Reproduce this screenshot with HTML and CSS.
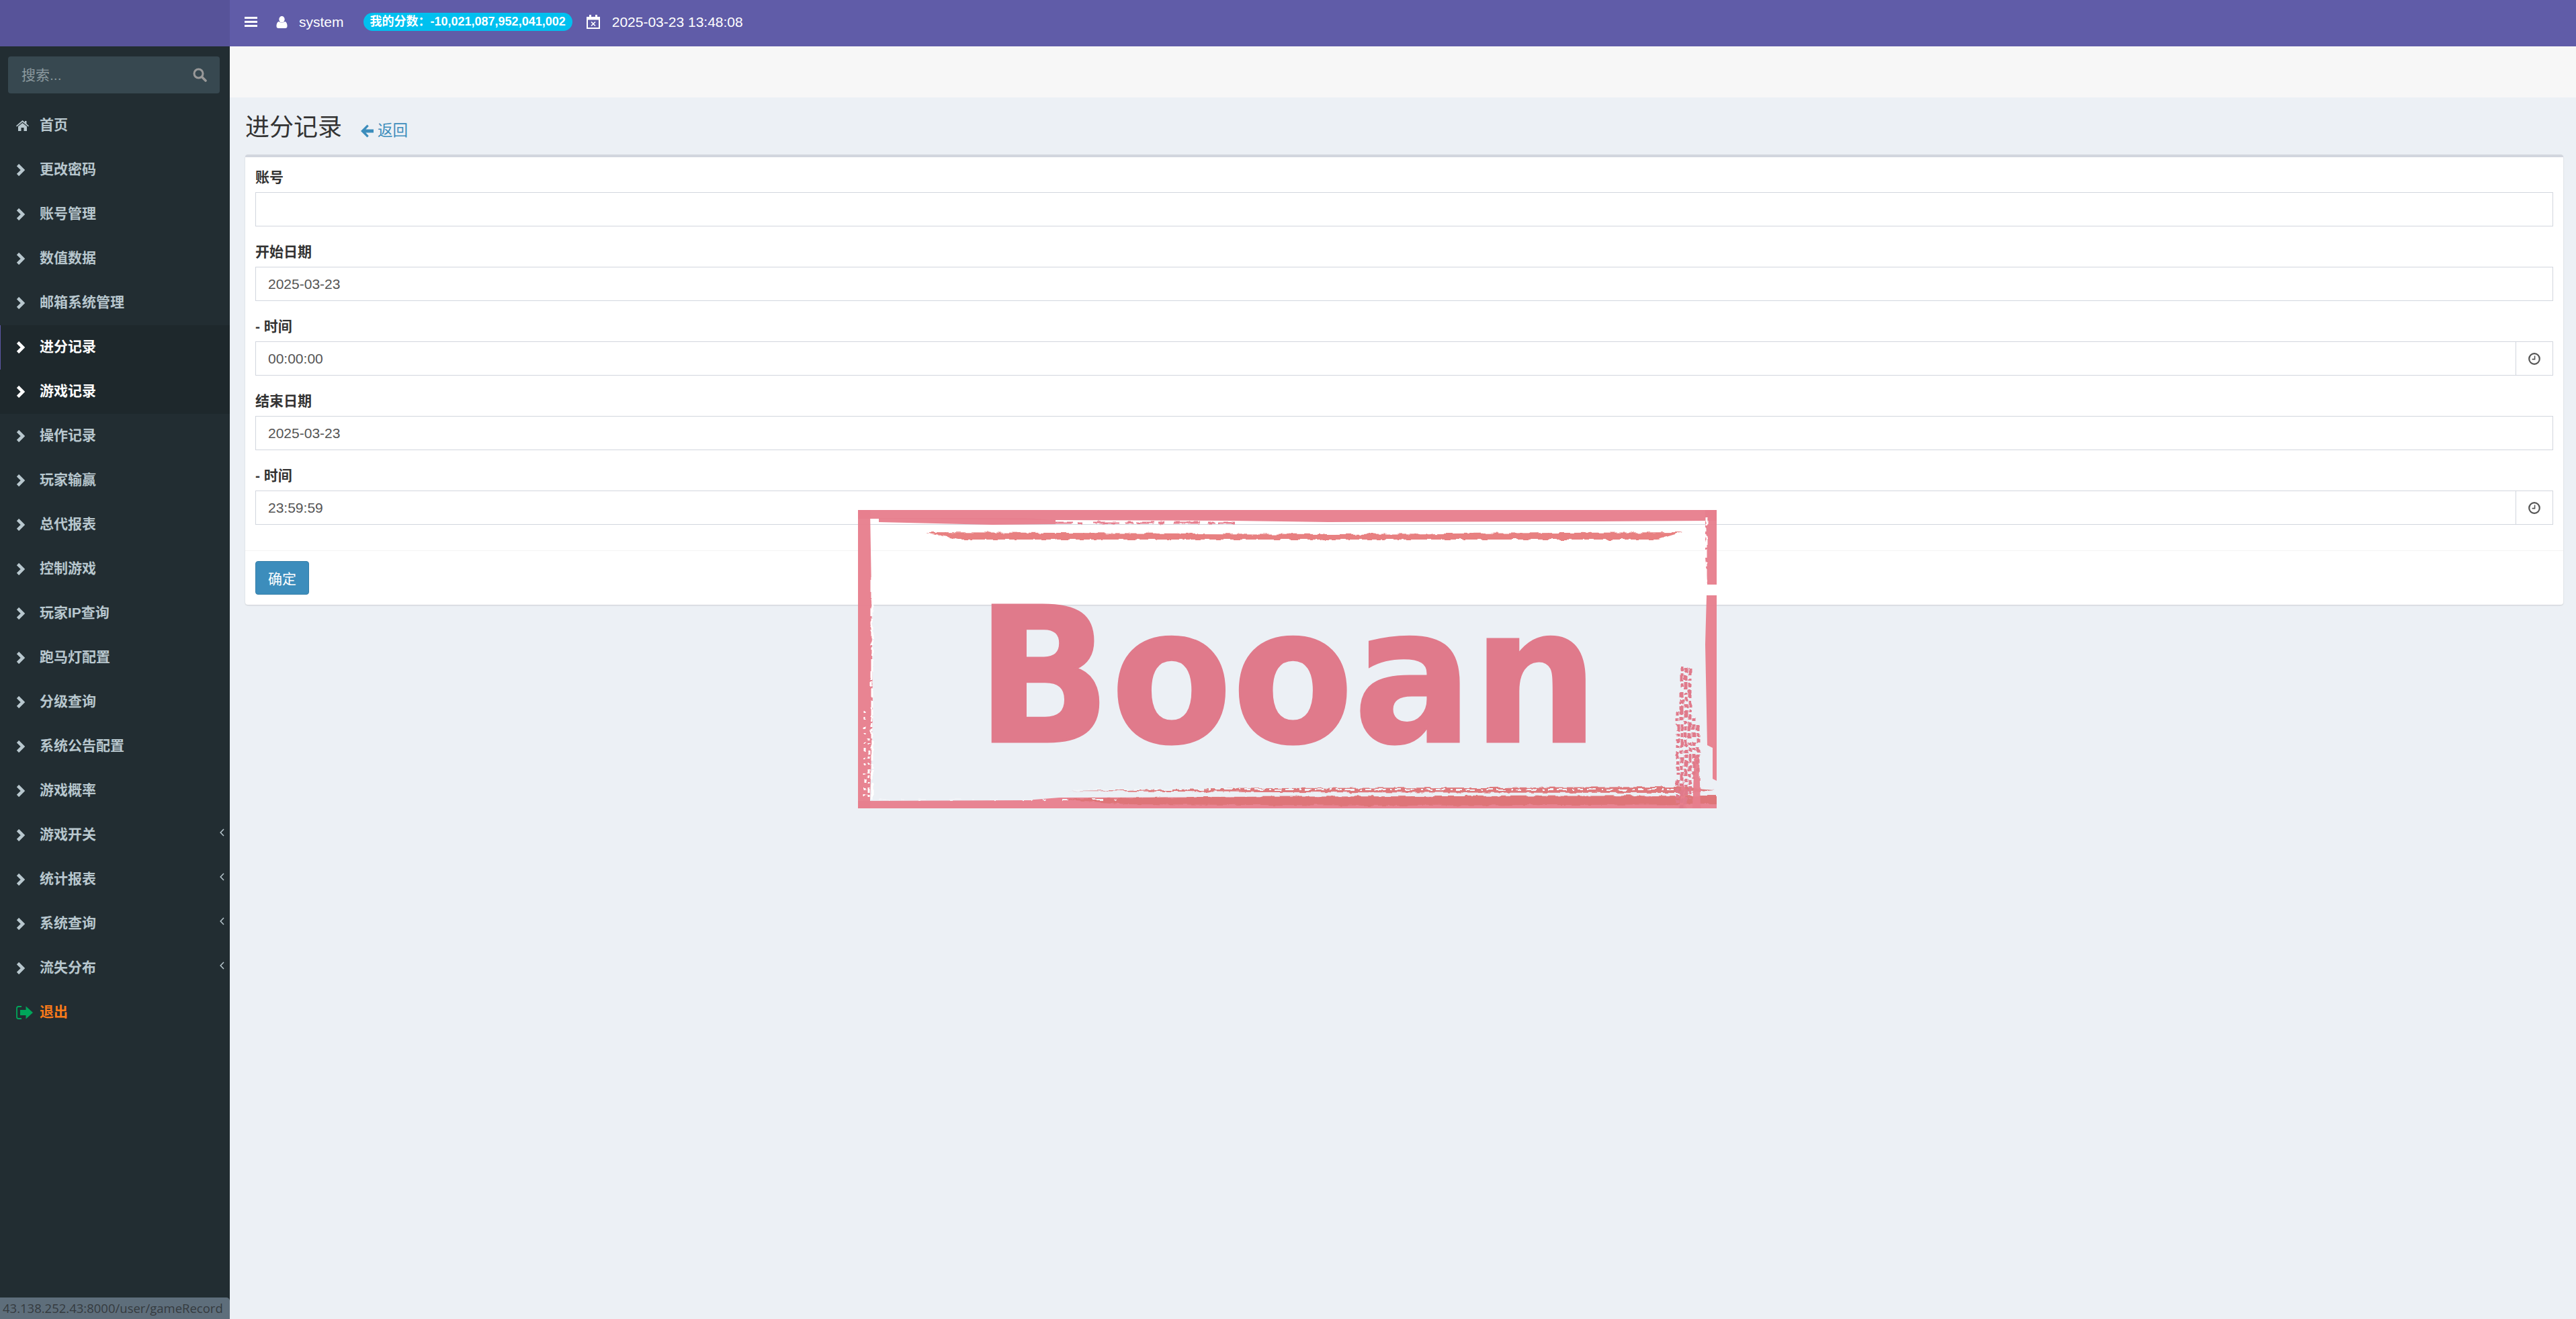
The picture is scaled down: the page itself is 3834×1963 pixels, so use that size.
FILE: index.html
```html
<!DOCTYPE html>
<html lang="zh-CN">
<head>
    <meta charset="UTF-8">
    <meta name="viewport" content="width=device-width, initial-scale=1.0">
    <title>进分记录</title>
    <link rel="stylesheet" href="styles.css">
</head>
<body>

<svg class="sprite" width="0" height="0">
    <symbol id="i-chevron" viewBox="0 0 13 18">
        <path d="M2.5 1.5 L10 9 L2.5 16.5" fill="none" stroke="currentColor" stroke-width="4.6"/>
    </symbol>
    <symbol id="i-angle" viewBox="0 0 7 12">
        <path d="M6 1 L1.2 6 L6 11" fill="none" stroke="currentColor" stroke-width="1.5"/>
    </symbol>
    <symbol id="i-home" viewBox="0 0 19 16">
        <path d="M9.5 0 L13 3 V1 H15.5 V5.2 L19 8.3 L18 9.6 L9.5 2.6 L1 9.6 L0 8.3 Z" fill="currentColor"/>
        <path d="M9.5 4 L16 9.3 V16 H11.5 V11 H7.5 V16 H3 V9.3 Z" fill="currentColor"/>
    </symbol>
    <symbol id="i-search" viewBox="0 0 21 21">
        <circle cx="8.5" cy="8.5" r="6.5" fill="none" stroke="currentColor" stroke-width="3"/>
        <path d="M13.5 13.5 L19 19" stroke="currentColor" stroke-width="3.6" stroke-linecap="round"/>
    </symbol>
    <symbol id="i-arrow" viewBox="0 0 19 20">
        <path d="M9.5 0.5 L11.8 2.8 L7.4 7.4 H19 V12.6 H7.4 L11.8 17.2 L9.5 19.5 L0 10 Z" fill="currentColor"/>
    </symbol>
    <symbol id="i-clock" viewBox="0 0 18 18">
        <circle cx="9" cy="9" r="7.8" fill="none" stroke="currentColor" stroke-width="2.2"/>
        <path d="M9.6 4.5 V9.6 H5.6" fill="none" stroke="currentColor" stroke-width="1.6"/>
    </symbol>
    <symbol id="i-signout" viewBox="0 0 25 20">
        <path d="M8 1 H3.5 Q1 1 1 3.5 V16.5 Q1 19 3.5 19 H8" fill="none" stroke="currentColor" stroke-width="1.8"/>
        <path d="M14.5 0.5 L25 10 L14.5 19.5 V14 H6 V6 H14.5 Z" fill="currentColor"/>
    </symbol>
    <symbol id="i-user" viewBox="0 0 17 18">
        <ellipse cx="8.5" cy="4.8" rx="4.2" ry="4.8" fill="currentColor"/>
        <path d="M3.6 8 Q8.5 11.5 13.4 8 Q16.5 9.5 16.5 15 Q16.5 18 13.5 18 H3.5 Q0.5 18 0.5 15 Q0.5 9.5 3.6 8 Z" fill="currentColor"/>
    </symbol>
    <symbol id="i-calendar" viewBox="0 0 20 21">
        <path d="M1 4 H19 V20 H1 Z" fill="none" stroke="currentColor" stroke-width="2"/>
        <path d="M0 3 H20 V7.5 H0 Z M4 0 H7 V4 H4 Z M13 0 H16 V4 H13 Z" fill="currentColor"/>
        <path d="M7 10.5 L13 16.5 M13 10.5 L7 16.5" stroke="currentColor" stroke-width="1.6"/>
    </symbol>
</svg>

<div class="wrapper">
    <aside class="sidebar">
        <div class="logo"></div>
        <form class="sidebar-search">
            <input type="text" placeholder="搜索...">
            <svg class="search-icon"><use href="#i-search"/></svg>
        </form>
        <ul class="menu">
            <li><a href="#"><svg class="menu-home"><use href="#i-home"/></svg><span>首页</span></a></li>
            <li><a href="#"><svg class="chev"><use href="#i-chevron"/></svg><span>更改密码</span></a></li>
            <li><a href="#"><svg class="chev"><use href="#i-chevron"/></svg><span>账号管理</span></a></li>
            <li><a href="#"><svg class="chev"><use href="#i-chevron"/></svg><span>数值数据</span></a></li>
            <li><a href="#"><svg class="chev"><use href="#i-chevron"/></svg><span>邮箱系统管理</span></a></li>
            <li class="active"><a href="#"><svg class="chev"><use href="#i-chevron"/></svg><span>进分记录</span></a></li>
            <li class="hover"><a href="#"><svg class="chev"><use href="#i-chevron"/></svg><span>游戏记录</span></a></li>
            <li><a href="#"><svg class="chev"><use href="#i-chevron"/></svg><span>操作记录</span></a></li>
            <li><a href="#"><svg class="chev"><use href="#i-chevron"/></svg><span>玩家输赢</span></a></li>
            <li><a href="#"><svg class="chev"><use href="#i-chevron"/></svg><span>总代报表</span></a></li>
            <li><a href="#"><svg class="chev"><use href="#i-chevron"/></svg><span>控制游戏</span></a></li>
            <li><a href="#"><svg class="chev"><use href="#i-chevron"/></svg><span>玩家IP查询</span></a></li>
            <li><a href="#"><svg class="chev"><use href="#i-chevron"/></svg><span>跑马灯配置</span></a></li>
            <li><a href="#"><svg class="chev"><use href="#i-chevron"/></svg><span>分级查询</span></a></li>
            <li><a href="#"><svg class="chev"><use href="#i-chevron"/></svg><span>系统公告配置</span></a></li>
            <li><a href="#"><svg class="chev"><use href="#i-chevron"/></svg><span>游戏概率</span></a></li>
            <li><a href="#"><svg class="chev"><use href="#i-chevron"/></svg><span>游戏开关</span><svg class="angle"><use href="#i-angle"/></svg></a></li>
            <li><a href="#"><svg class="chev"><use href="#i-chevron"/></svg><span>统计报表</span><svg class="angle"><use href="#i-angle"/></svg></a></li>
            <li><a href="#"><svg class="chev"><use href="#i-chevron"/></svg><span>系统查询</span><svg class="angle"><use href="#i-angle"/></svg></a></li>
            <li><a href="#"><svg class="chev"><use href="#i-chevron"/></svg><span>流失分布</span><svg class="angle"><use href="#i-angle"/></svg></a></li>
            <li class="logout"><a href="#"><svg class="menu-out"><use href="#i-signout"/></svg><span>退出</span></a></li>
        </ul>
    </aside>

    <div class="main">
        <nav class="navbar">
            <span class="bars"><i></i><i></i><i></i></span>
            <svg class="user-icon"><use href="#i-user"/></svg>
            <span class="user-name">system</span>
            <span class="badge">我的分数：-10,021,087,952,041,002</span>
            <svg class="cal-icon"><use href="#i-calendar"/></svg>
            <span class="now">2025-03-23 13:48:08</span>
        </nav>
        <div class="band"></div>
        <section class="content">
            <h1>进分记录 <a class="back" href="#"><svg class="back-icon"><use href="#i-arrow"/></svg>返回</a></h1>
            <form class="box">
                <div class="box-body">
                    <div class="form-group">
                        <label for="account">账号</label>
                        <input class="form-control" type="text" id="account">
                    </div>
                    <div class="form-group">
                        <label for="startDate">开始日期</label>
                        <input class="form-control" type="text" id="startDate" value="2025-03-23">
                    </div>
                    <div class="form-group">
                        <label for="startTime">- 时间</label>
                        <div class="input-group">
                            <input class="form-control" type="text" id="startTime" value="00:00:00">
                            <span class="addon"><svg class="clock"><use href="#i-clock"/></svg></span>
                        </div>
                    </div>
                    <div class="form-group">
                        <label for="endDate">结束日期</label>
                        <input class="form-control" type="text" id="endDate" value="2025-03-23">
                    </div>
                    <div class="form-group">
                        <label for="endTime">- 时间</label>
                        <div class="input-group">
                            <input class="form-control" type="text" id="endTime" value="23:59:59">
                            <span class="addon"><svg class="clock"><use href="#i-clock"/></svg></span>
                        </div>
                    </div>
                </div>
                <div class="box-footer">
                    <button class="btn" type="button">确定</button>
                </div>
            </form>
        </section>
    </div>
</div>

<!-- stamp over the page -->
<svg class="stamp" viewBox="0 0 1278 444" aria-hidden="true">
    <defs>
        <filter id="rough" filterUnits="userSpaceOnUse" x="0" y="0" width="1278" height="444">
            <feTurbulence type="fractalNoise" baseFrequency="0.07 0.09" numOctaves="3" seed="4"/>
            <feDisplacementMap in="SourceGraphic" scale="6" xChannelSelector="R" yChannelSelector="G"/>
        </filter>
    </defs>
    <text class="stamp-text" x="176" y="345" textLength="926" lengthAdjust="spacingAndGlyphs">Booan</text>
    <g class="stamp-frame">
        <path d="M0 0H1278V16L1100 17 700 18 558 16 294 15 31 13H0Z"/>
        <path d="M31 12H250L294 15 294 21 200 22 31 18Z"/>
        <path d="M0 0H18L20 120 22 300 18 430V444H0Z"/>
        <path d="M1261 0H1278V111H1264L1261 70Z"/>
        <path d="M1263 127H1278V403L1272 400 1272 354 1264 350 1261 200Z"/>
        <path d="M0 444V433L250 432 300 428 1278 426V444Z"/>
    </g>
    <g class="stamp-frame" filter="url(#rough)">
        <path class="streak" d="M102 33L300 34 700 36 1226 33 1190 44 150 44Z"/>
        <path class="streak-low" d="M312 418L620 414 1220 412 1276 416 1220 421 600 420Z"/>
        <path class="streak-low" d="M300 430L500 427 1278 425V438L800 440 400 438Z"/>
        <path d="M1245 364L1252 370 1254 444H1242Z"/>
        <path d="M1228 400L1232 444H1222Z"/>
    </g>
    <g class="speck" filter="url(#rough)">
        <path stroke-dasharray="7 3 12 4 5 6 9 3" d="M1226 233V444"/>
        <path stroke-dasharray="5 4 8 3 11 5 4 3" d="M1232 236V440"/>
        <path stroke-dasharray="9 5 4 4 6 3 13 4" d="M1238 236V430"/>
        <path stroke-dasharray="6 3 4 6 10 4 5 3" d="M1220 300V436"/>
        <path stroke-dasharray="4 5 7 4 9 6 5 4" d="M1244 310V400"/>
        <path stroke-dasharray="8 4 5 3 6 6" d="M1250 320V390"/>
    </g>
    <g class="fragment" filter="url(#rough)">
        <path stroke-dasharray="26 6 9 14 40 9 12 5" d="M294 19H560"/>
    </g>
    <g class="scratch" filter="url(#rough)">
        <path stroke-dasharray="30 3 8 2 14 4" d="M21 100V430"/>
        <path stroke-dasharray="2 6 5 9 3 7 2 12" d="M10 300V436"/>
        <path stroke-dasharray="3 5 2 8 6 4" d="M16 340V432"/>
        <path stroke-dasharray="12 5 6 4 20 3" d="M1262 10V110"/>
    </g>
    <g class="scratch-low" filter="url(#rough)">
        <path stroke-dasharray="18 16 4 23 10 35" d="M30 431H400"/>
        <path stroke-dasharray="14 8 3 5 9 6" d="M320 416H1220"/>
    </g>
</svg>

<div class="status-url">43.138.252.43:8000/user/gameRecord</div>

</body>
</html>
```
FILE: styles.css
```css
* {
    box-sizing: border-box;
}
html, body {
    height: 100%;
}
body {
    margin: 0;
    font-family: "Liberation Sans", "Noto Sans CJK SC", sans-serif;
    font-size: 21px;
    color: #333;
    background-color: #ecf0f5;
    overflow: hidden;
}
a {
    text-decoration: none;
}
.sprite {
    position: absolute;
}
.wrapper {
    display: flex;
    height: 100%;
}

/* sidebar */
.sidebar {
    width: 342px;
    flex-shrink: 0;
    background-color: #222d32;
}
.logo {
    height: 69px;
    background-color: #575399;
}
.sidebar-search {
    display: flex;
    align-items: center;
    height: 55px;
    margin: 15px 15px 15px 12px;
    padding: 0 19px 0 20px;
    background-color: #374850;
    border-radius: 4px;
}
.sidebar-search input {
    flex: 1;
    min-width: 0;
    border: none;
    outline: none;
    padding: 0;
    font: inherit;
    color: #fff;
    background: transparent;
}
.sidebar-search input::placeholder {
    color: #8c9a9f;
}
.search-icon {
    width: 21px;
    height: 21px;
    color: #999;
}
.menu {
    list-style: none;
    margin: 0;
    padding: 0;
}
.menu a {
    display: flex;
    align-items: center;
    position: relative;
    height: 66px;
    padding-left: 24px;
    padding-bottom: 1px;
    font-weight: bold;
    color: #b8c7ce;
}
.menu span {
    position: absolute;
    left: 59px;
    top: 17px;
    line-height: 30px;
}
.chev {
    width: 13px;
    height: 18px;
}
.menu-home {
    width: 19px;
    height: 16px;
}
.menu-out {
    width: 25px;
    height: 20px;
    color: #00a65a;
}
.angle {
    position: absolute;
    left: 327px;
    top: 23px;
    width: 7px;
    height: 12px;
}
.menu .active a,
.menu .hover a {
    color: #fff;
    background-color: #1e282c;
}
.menu .active a {
    border-left: 1px solid #5c57a3;
    padding-left: 23px;
}
.menu .active span {
    left: 58px;
}
.menu .logout a {
    color: #f97a1a;
}
.menu .logout .menu-out {
    color: #00a65a;
}

/* top bar */
.main {
    flex: 1;
    min-width: 0;
}
.navbar {
    display: flex;
    align-items: center;
    height: 69px;
    padding: 0 0 4px 22px;
    color: #fff;
    background-color: #605ca8;
}
.bars {
    display: flex;
    flex-direction: column;
    gap: 3px;
    width: 19px;
}
.bars i {
    display: block;
    height: 3px;
    background-color: #fff;
}
.user-icon {
    width: 17px;
    height: 18px;
    margin-left: 28px;
}
.user-name {
    margin-left: 17px;
}
.badge {
    margin-left: 29px;
    padding: 0 10px;
    height: 27px;
    line-height: 27px;
    font-size: 18px;
    font-weight: bold;
    white-space: nowrap;
    background-color: #00c0ef;
    border-radius: 14px;
}
.cal-icon {
    width: 20px;
    height: 21px;
    margin-left: 21px;
}
.now {
    margin-left: 18px;
}
.band {
    height: 76px;
    background-color: #f7f7f7;
}

/* content */
.content {
    padding: 0 19px 0 23px;
}
.content h1 {
    height: 85px;
    margin: 0;
    padding-top: 23px;
    font-size: 36px;
    font-weight: normal;
    line-height: 44px;
}
.back {
    margin-left: 18px;
    font-size: 22.5px;
    color: #3c8dbc;
}
.back-icon {
    width: 19px;
    height: 20px;
    margin-right: 6px;
    vertical-align: -3px;
}
.box {
    background-color: #fff;
    border-top: 4px solid #d2d6de;
    border-radius: 4px;
    box-shadow: 0 1px 2px rgba(0, 0, 0, 0.15);
}
.box-body {
    padding: 15px 15px 15px;
}
.form-group {
    margin-bottom: 23px;
}
.form-group label {
    display: block;
    height: 30px;
    margin-bottom: 7px;
    line-height: 30px;
    font-weight: bold;
}
.form-control {
    display: block;
    width: 100%;
    height: 51px;
    padding: 0 18px;
    border: 1px solid #d2d6de;
    outline: none;
    font: inherit;
    color: #555;
    background-color: #fff;
}
.input-group {
    display: flex;
}
.input-group .form-control {
    flex: 1;
    min-width: 0;
}
.addon {
    display: flex;
    align-items: center;
    justify-content: center;
    width: 55px;
    border: 1px solid #d2d6de;
    border-left: none;
    color: #555;
}
.clock {
    width: 18px;
    height: 18px;
}
.box-footer {
    padding: 15px;
    border-top: 1px solid #f4f4f4;
}
.btn {
    display: block;
    width: 80px;
    height: 50px;
    padding: 0;
    font: inherit;
    color: #fff;
    background-color: #3c8dbc;
    border: 1px solid #367fa9;
    border-radius: 4px;
}

/* stamp */
.stamp {
    position: absolute;
    left: 1277px;
    top: 759px;
    width: 1278px;
    height: 444px;
    pointer-events: none;
}
.stamp-text {
    font-family: "DejaVu Sans", sans-serif;
    font-size: 280px;
    font-weight: bold;
    fill: #e07a8b;
    stroke: #e07a8b;
    stroke-width: 3;
}
.stamp-frame {
    fill: #e77f8e;
    fill-opacity: 0.96;
}
.streak {
    fill: #e77b7c;
}
.streak-low {
    fill: #de7577;
}
.speck {
    fill: none;
    stroke: #e07a8b;
    stroke-width: 5;
}
.fragment {
    fill: none;
    stroke: #e77f8e;
    stroke-width: 3;
}
.scratch {
    fill: none;
    stroke: #fff;
    stroke-width: 3;
}
.scratch-low {
    fill: none;
    stroke: #f2f4f8;
    stroke-width: 2;
}

/* browser link preview, bottom left */
.status-url {
    position: absolute;
    left: 0;
    bottom: 0;
    width: 342px;
    height: 32px;
    padding-left: 4px;
    font-family: "Open Sans", sans-serif;
    font-size: 18.5px;
    line-height: 32px;
    white-space: nowrap;
    color: #353b3f;
    background-color: #5e6e7b;
    border-top-right-radius: 5px;
}
```
